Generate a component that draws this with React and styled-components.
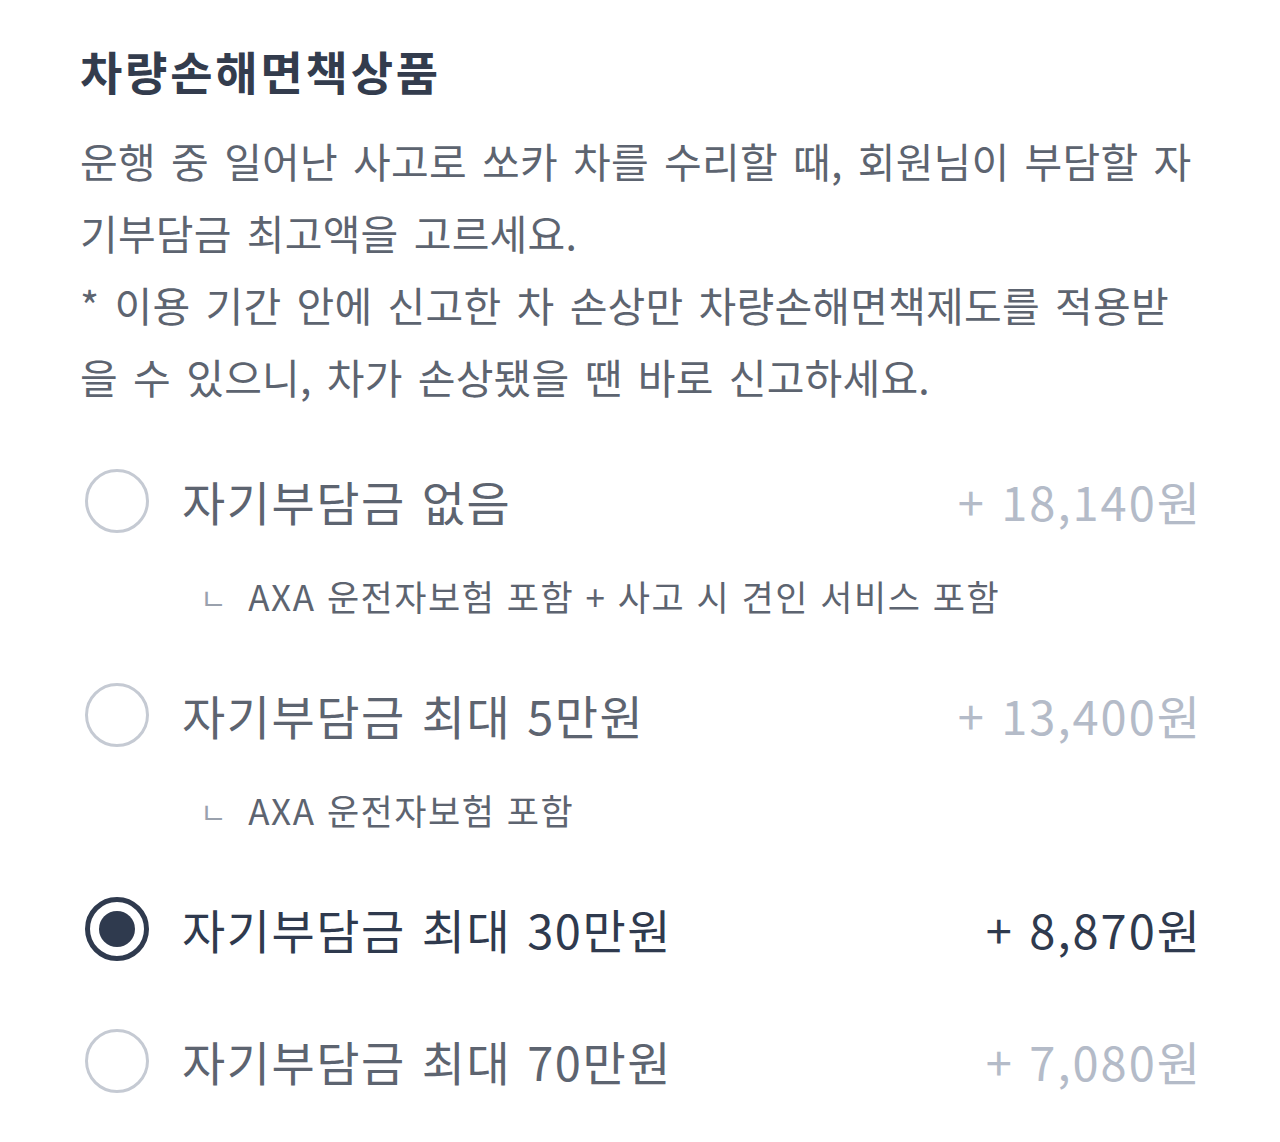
import React, { useState } from "react";
import styled, { createGlobalStyle } from "styled-components";

const GlobalStyle = createGlobalStyle`
  html, body {
    margin: 0;
    padding: 0;
    background: #ffffff;
  }
  body {
    font-family: "Noto Sans CJK KR", "Noto Sans", sans-serif;
    -webkit-font-smoothing: antialiased;
  }
`;

const Page = styled.div`
  width: 1280px;
  box-sizing: border-box;
  padding: 40px 82px 40px 80px;
`;

const Title = styled.h2`
  margin: 0;
  font-size: 46px;
  line-height: 60px;
  font-weight: 700;
  color: #333c4d;
  letter-spacing: 2.8px;
`;

const Desc = styled.p`
  margin: 24px 0 0;
  font-size: 41px;
  line-height: 72px;
  color: #5d6470;
  letter-spacing: 0.2px;
  word-spacing: 5.8px;
  white-space: nowrap;
`;

const Options = styled.ul`
  list-style: none;
  margin: 49px 0 0;
  padding: 0;
  display: flex;
  flex-direction: column;
  gap: 52px;
`;

const Item = styled.li`
  display: flex;
  flex-direction: column;
`;

const Row = styled.label`
  display: flex;
  align-items: center;
  height: 80px;
  cursor: pointer;
`;

const Radio = styled.span`
  flex: none;
  box-sizing: border-box;
  width: 64px;
  height: 64px;
  margin-left: 5px;
  border-radius: 50%;
  border: ${(p) => (p.$checked ? "5px solid #2f3a4e" : "3px solid #c5cad3")};
  display: flex;
  align-items: center;
  justify-content: center;

  &::after {
    content: "";
    display: ${(p) => (p.$checked ? "block" : "none")};
    width: 36px;
    height: 36px;
    border-radius: 50%;
    background: #2f3a4e;
  }
`;

const Label = styled.span`
  margin-left: 33px;
  flex: 1;
  font-size: 47px;
  line-height: 80px;
  color: ${(p) => (p.$checked ? "#2f3a4e" : "#5d6470")};
  letter-spacing: 1.5px;
  word-spacing: 4px;
`;

const Price = styled.span`
  margin-right: -4px;
  font-size: 47px;
  line-height: 80px;
  color: ${(p) => (p.$checked ? "#2f3a4e" : "#b4bbc8")};
  letter-spacing: 2px;
  word-spacing: 3px;
`;

const Sub = styled.div`
  margin-top: 29px;
  padding-bottom: 3px;
  padding-left: 120px;
  display: flex;
  align-items: center;
  height: 50px;
  font-size: 35px;
  color: #5d6470;
  letter-spacing: 1.5px;
  word-spacing: 2px;
  white-space: pre;
`;

const Corner = styled.span`
  font-size: 29px;
  color: #9aa1ad;
  margin-right: 20px;
  position: relative;
  top: 2px;
`;

const options = [
  { id: 0, label: "자기부담금 없음", price: "+ 18,140원", sub: "AXA 운전자보험 포함 + 사고 시 견인 서비스 포함" },
  { id: 1, label: "자기부담금 최대 5만원", price: "+ 13,400원", sub: "AXA 운전자보험 포함" },
  { id: 2, label: "자기부담금 최대 30만원", price: "+ 8,870원" },
  { id: 3, label: "자기부담금 최대 70만원", price: "+ 7,080원" }
];

export default function App() {
  const [selected, setSelected] = useState(2);

  return (
    <Page>
      <GlobalStyle />
      <Title>차량손해면책상품</Title>
      <Desc>
        운행 중 일어난 사고로 쏘카 차를 수리할 때, 회원님이 부담할 자
        <br />
        기부담금 최고액을 고르세요.
        <br />* 이용 기간 안에 신고한 차 손상만 차량손해면책제도를 적용받
        <br />을 수 있으니, 차가 손상됐을 땐 바로 신고하세요.
      </Desc>
      <Options>
        {options.map((o) => {
          const checked = o.id === selected;
          return (
            <Item key={o.id}>
              <Row onClick={() => setSelected(o.id)}>
                <Radio $checked={checked} />
                <Label $checked={checked}>{o.label}</Label>
                <Price $checked={checked}>{o.price}</Price>
              </Row>
              {o.sub && (
                <Sub>
                  <Corner>ㄴ</Corner>
                  {o.sub}
                </Sub>
              )}
            </Item>
          );
        })}
      </Options>
    </Page>
  );
}
